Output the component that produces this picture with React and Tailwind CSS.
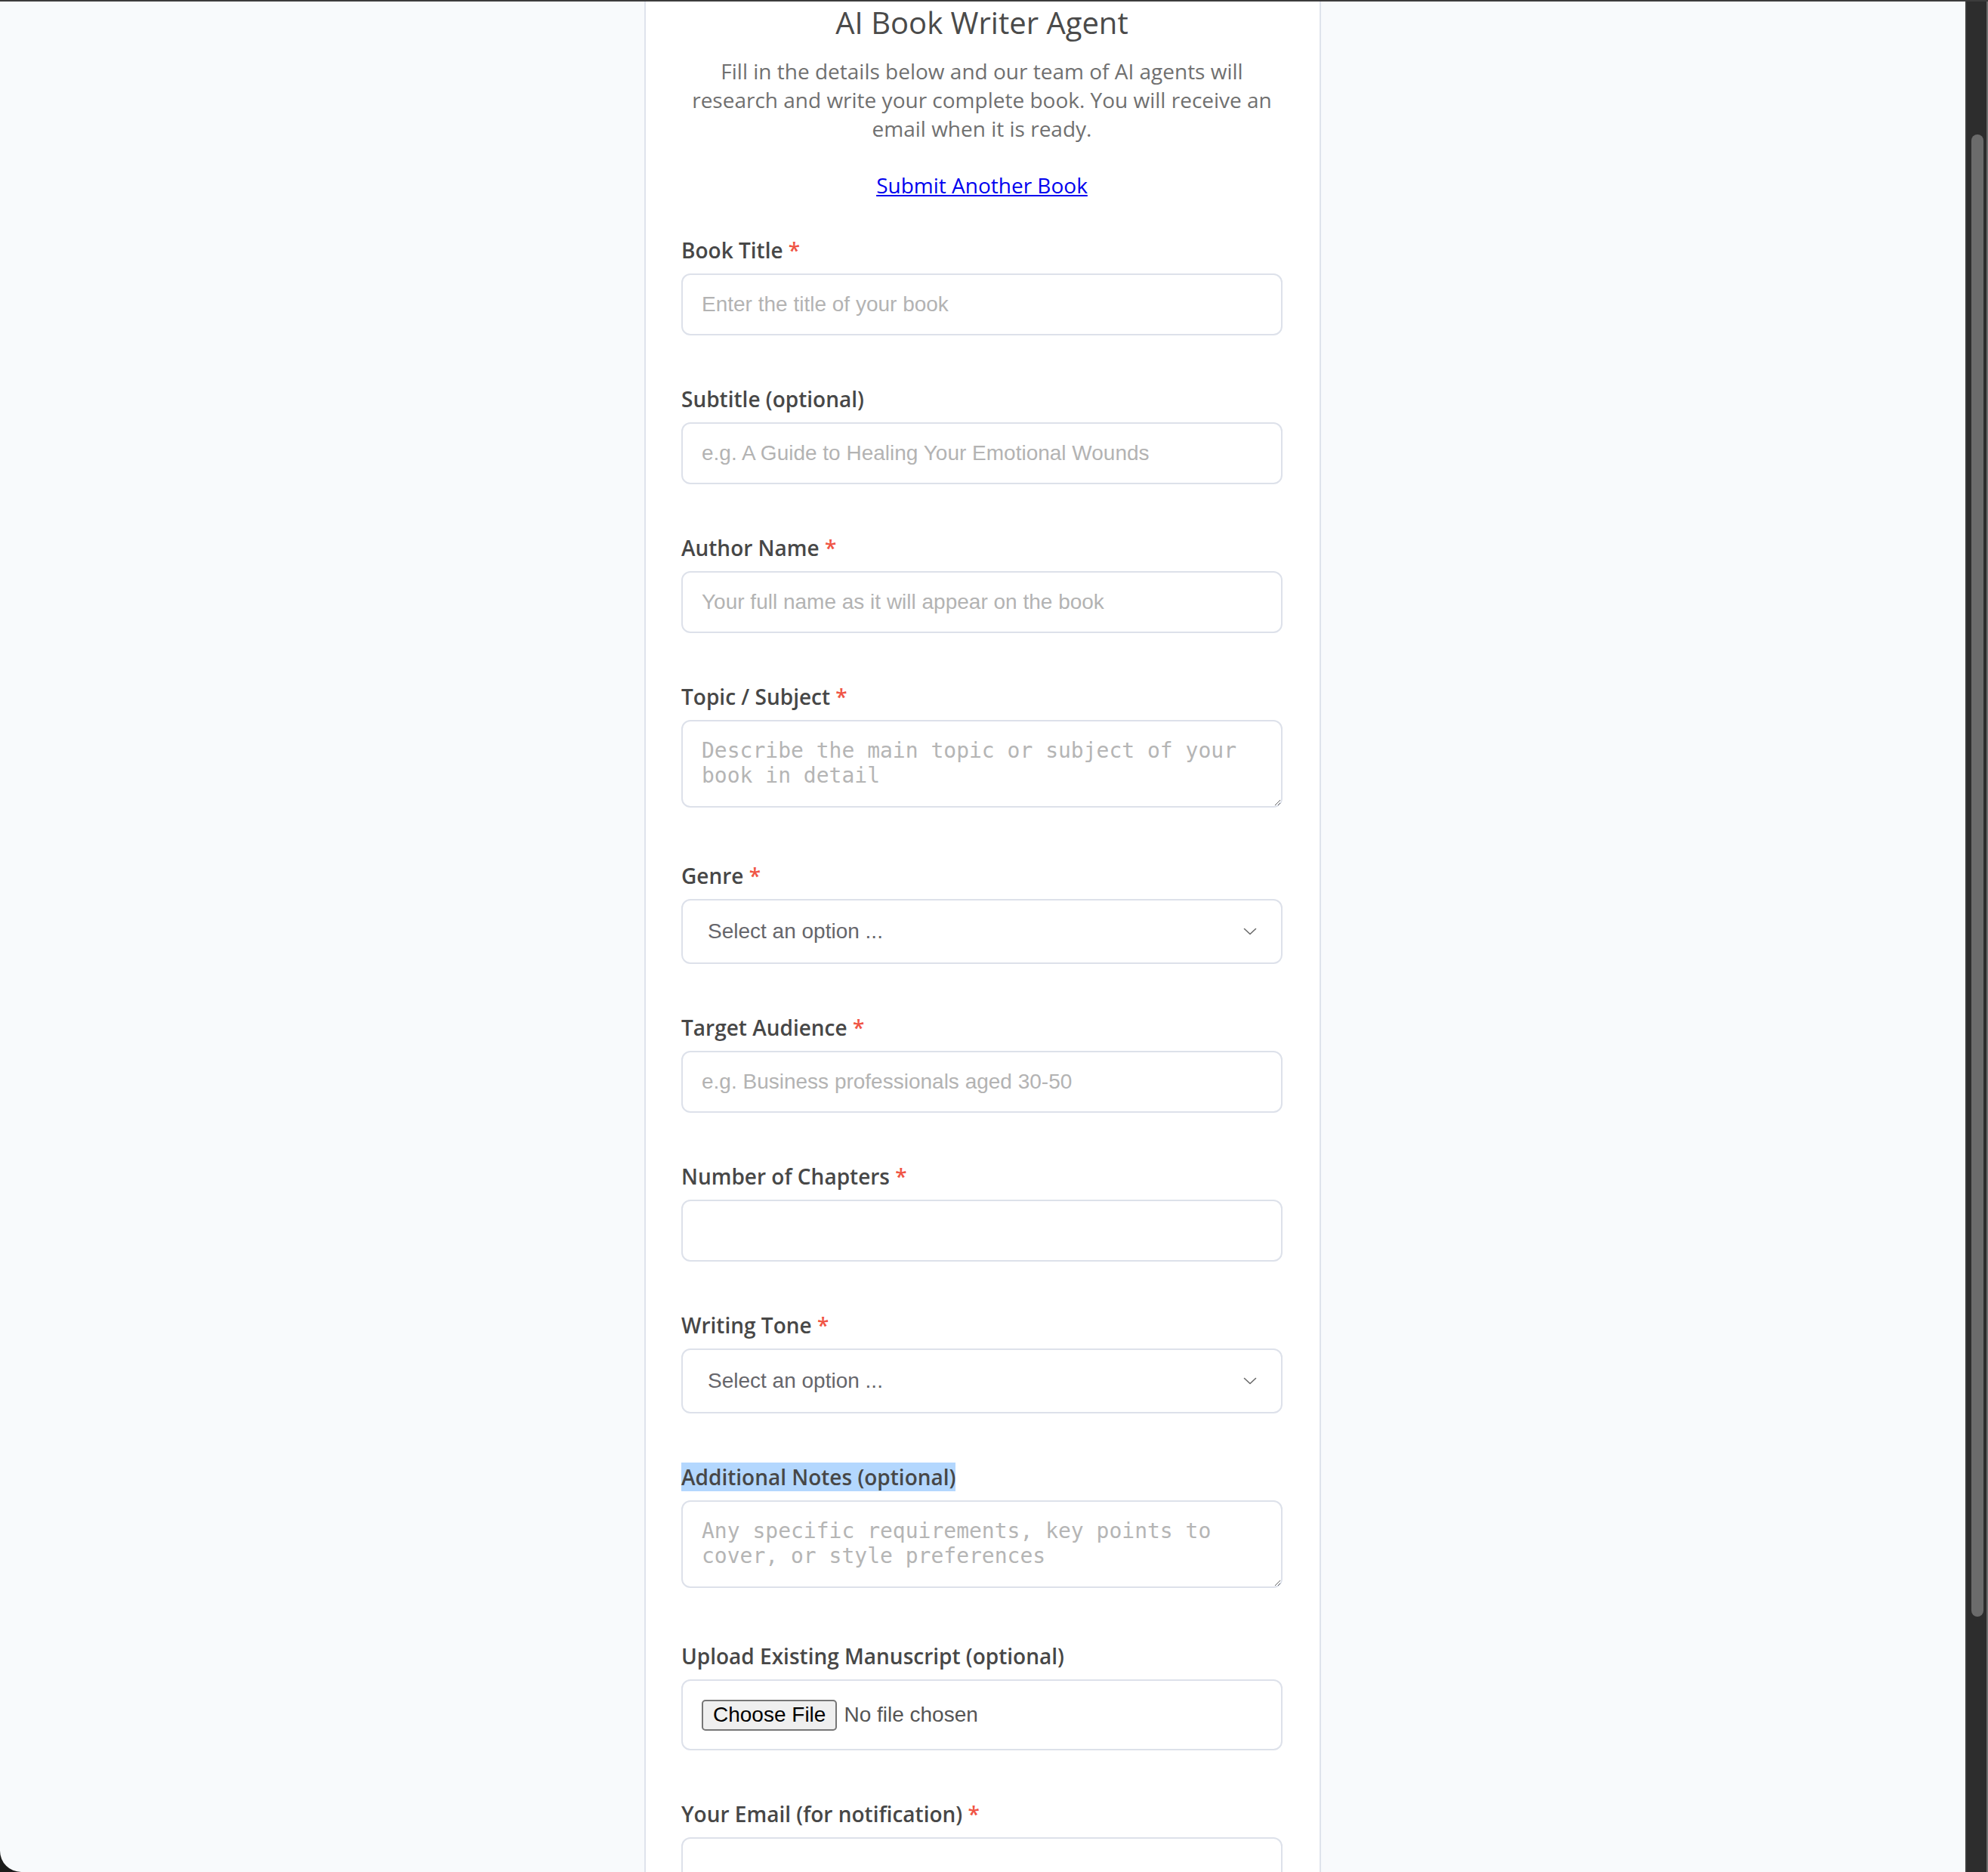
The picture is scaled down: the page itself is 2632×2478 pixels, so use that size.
import React from "react";

const fields = [
  { label: "Book Title", required: true, kind: "input", placeholder: "Enter the title of your book" },
  { label: "Subtitle (optional)", kind: "input", placeholder: "e.g. A Guide to Healing Your Emotional Wounds" },
  { label: "Author Name", required: true, kind: "input", placeholder: "Your full name as it will appear on the book" },
  { label: "Topic / Subject", required: true, kind: "textarea", placeholder: "Describe the main topic or subject of your book in detail" },
  { label: "Genre", required: true, kind: "select" },
  { label: "Target Audience", required: true, kind: "input", placeholder: "e.g. Business professionals aged 30-50" },
  { label: "Number of Chapters", required: true, kind: "input", placeholder: "" },
  { label: "Writing Tone", required: true, kind: "select" },
  {
    label: "Additional Notes (optional)",
    kind: "textarea",
    placeholder: "Any specific requirements, key points to cover, or style preferences",
    selected: true,
  },
  { label: "Upload Existing Manuscript (optional)", kind: "file" },
  { label: "Your Email (for notification)", required: true, kind: "input", placeholder: "" },
];

const sans = "font-['Liberation_Sans',Arial,sans-serif]";

const Chevron = () => (
  <svg width="18" height="10" viewBox="0 0 18 10" fill="none">
    <path d="M1.5 1.5 L9 8.5 L16.5 1.5" stroke="#6a6a6a" strokeWidth="1.6" strokeLinecap="round" strokeLinejoin="round" />
  </svg>
);

function Control({ field }) {
  if (field.kind === "textarea") {
    return (
      <textarea
        placeholder={field.placeholder}
        className="block w-full h-[116px] border-2 border-[#dde1ea] rounded-[12px] bg-white px-[25px] py-[22px] font-['DejaVu_Sans_Mono',Menlo,monospace] text-[28px] leading-[33px] text-[#333] placeholder:text-[#b5b5b5] outline-none"
      />
    );
  }

  if (field.kind === "select") {
    return (
      <div className={`flex items-center justify-between h-[86px] border-2 border-[#dde1ea] rounded-[12px] bg-white pl-[33px] pr-[32px] ${sans} text-[28px] text-[#66666b]`}>
        <span>Select an option ...</span>
        <Chevron />
      </div>
    );
  }

  if (field.kind === "file") {
    return (
      <div className={`flex items-center h-[94px] border-2 border-[#dde1ea] rounded-[12px] bg-white px-[25px] ${sans} text-[28px]`}>
        <button className="h-[41px] px-[13px] bg-[#efefef] border-2 border-[#767676] rounded-[5px] text-black leading-none">
          Choose File
        </button>
        <span className="ml-[9px] text-[#555]">No file chosen</span>
      </div>
    );
  }

  return (
    <input
      type="text"
      placeholder={field.placeholder}
      className={`block w-full h-[82px] border-2 border-[#dde1ea] rounded-[12px] bg-white px-[25px] ${sans} text-[28px] text-[#333] placeholder:text-[#b3b3b3] outline-none`}
    />
  );
}

export default function App() {
  return (
    <div className="w-[2632px] h-[2478px] overflow-hidden bg-[#1c1c1c]">
      {/* window frame line */}
      <div className="h-[2px] bg-[#3c3c3c]" />

      <div className="flex h-[2476px] rounded-bl-[28px] overflow-hidden">
        {/* page */}
        <main className="flex-1 flex justify-center bg-[#f8fafc] overflow-hidden font-['Open_Sans',sans-serif]">
          <div className="w-[896px] shrink-0 bg-white border-x-2 border-[#dfe3ec] pl-[47px] pr-[49px] pt-[4px]">
            <h1 className="text-center text-[40px] leading-[48px] font-normal text-[#4a4a4a]">
              AI Book Writer Agent
            </h1>
            <p className="mt-[21px] text-center text-[28px] leading-[38px] text-[#707070]">
              Fill in the details below and our team of AI agents will research and write your complete book. You will
              receive an email when it is ready.
            </p>
            <div className="mt-[37px] text-center text-[28px] leading-[38px]">
              <a href="#" className="text-[#0000ee] underline">
                Submit Another Book
              </a>
            </div>

            <form className="mt-[48px]">
              {fields.map((field) => (
                <div key={field.label} className={field.kind === "textarea" ? "mb-[71px]" : "mb-[65px]"}>
                  <label className="block mb-[12px] text-[28px] leading-[38px] font-semibold text-[#474747]">
                    <span className={field.selected ? "bg-[#b3d7fe]" : ""}>{field.label}</span>
                    {field.required && <span className="text-[#f05545]"> *</span>}
                  </label>
                  <Control field={field} />
                </div>
              ))}
            </form>
          </div>
        </main>

        {/* scrollbar */}
        <div className="w-[30px] flex bg-[#2d2d2d] border-l-2 border-[#3a3a3a]">
          <div className="flex-1 pt-[176px] pl-[6px]">
            <div className="w-[16px] h-[1962px] rounded-full bg-[#6b6b6b]" />
          </div>
          <div className="w-[2px] bg-[#6f6f6f]" />
        </div>
      </div>
    </div>
  );
}
